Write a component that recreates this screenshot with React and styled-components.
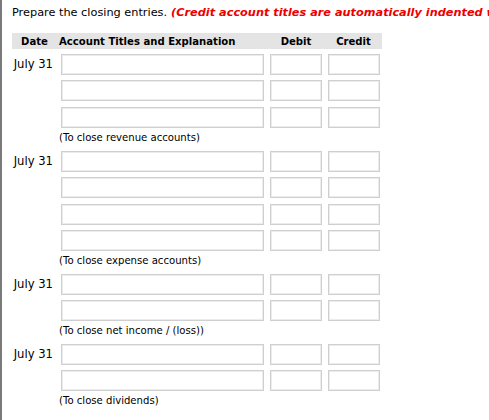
import React from "react";
import styled, { createGlobalStyle } from "styled-components";

const GlobalStyle = createGlobalStyle`
  html, body {
    margin: 0;
    padding: 0;
    background: #ffffff;
  }
  body {
    font-family: "DejaVu Sans", Verdana, sans-serif;
    color: #000;
    overflow: hidden;
  }
`;

const Page = styled.div`
  width: 489px;
  height: 420px;
  box-sizing: border-box;
  border-left: 2px solid #7a7a7a;
  padding: 5px 0 0 10px;
  overflow: hidden;
`;

const Prompt = styled.p`
  margin: 0;
  font-size: 11.3px;
  line-height: 15px;
  white-space: nowrap;
`;

const Note = styled.em`
  color: #ee0000;
  font-weight: bold;
  font-style: italic;
  margin-left: 4px;
`;

const Journal = styled.div`
  margin-top: 13px;
  width: 370px;
`;

const HeaderRow = styled.div`
  display: flex;
  height: 16px;
  align-items: center;
  background: #e4e4e4;
  font-size: 10.1px;
  font-weight: bold;
`;

const HeadCell = styled.div`
  flex: 0 0 ${(p) => p.$w}px;
  text-align: ${(p) => (p.$left ? "left" : "center")};
  padding-left: ${(p) => (p.$left ? "2px" : "0")};
  box-sizing: border-box;
  white-space: nowrap;
`;

const EntryRow = styled.div`
  display: flex;
  align-items: center;
  gap: 6px;
  height: 26.5px;
  padding-top: 4.3px;
  box-sizing: border-box;
`;

const DateCell = styled.div`
  flex: 0 0 49px;
  box-sizing: border-box;
  font-size: 11.6px;
  text-align: right;
  padding-right: 8px;
  white-space: nowrap;
  margin-right: -6px;
  margin-top: -1px;
`;

const Field = styled.input`
  flex: 0 0 ${(p) => p.$w}px;
  box-sizing: border-box;
  height: 21px;
  width: ${(p) => p.$w}px;
  margin: 0;
  padding: 0 4px;
  background: #fff;
  border: 1px solid #cfcfcf;
  box-shadow: inset 0 0 0 1px #ececec;
  border-radius: 0;
  outline: none;
  font: 12px "DejaVu Sans", Verdana, sans-serif;
`;

const Explanation = styled.div`
  height: 17.2px;
  line-height: 17px;
  padding-left: 47px;
  font-size: 10.1px;
  white-space: nowrap;
`;

const entries = [
  { lines: 3, note: "(To close revenue accounts)" },
  { lines: 4, note: "(To close expense accounts)" },
  { lines: 2, note: "(To close net income / (loss))" },
  { lines: 2, note: "(To close dividends)" },
];

function Entry({ lines, note }) {
  return (
    <>
      {Array.from({ length: lines }, (_, i) => (
        <EntryRow key={i}>
          <DateCell>{i === 0 ? "July 31" : ""}</DateCell>
          <Field type="text" $w={203} />
          <Field type="text" $w={52} />
          <Field type="text" $w={52} />
        </EntryRow>
      ))}
      <Explanation>{note}</Explanation>
    </>
  );
}

export default function App() {
  return (
    <>
      <GlobalStyle />
      <Page>
        <Prompt>
          Prepare the closing entries.
          <Note>(Credit account titles are automatically indented when amount is entered. Do not indent manually.)</Note>
        </Prompt>
        <Journal>
          <HeaderRow>
            <HeadCell $w={45}>Date</HeadCell>
            <HeadCell $w={210} $left>Account Titles and Explanation</HeadCell>
            <HeadCell $w={58}>Debit</HeadCell>
            <HeadCell $w={57}>Credit</HeadCell>
          </HeaderRow>
          {entries.map((e, i) => (
            <Entry key={i} {...e} />
          ))}
        </Journal>
      </Page>
    </>
  );
}
